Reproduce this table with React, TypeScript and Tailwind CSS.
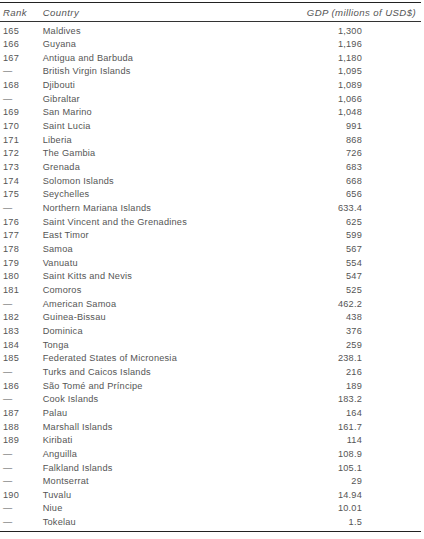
const rows: [string, string, string][] = [
  ["165", "Maldives", "1,300"],
  ["166", "Guyana", "1,196"],
  ["167", "Antigua and Barbuda", "1,180"],
  ["—", "British Virgin Islands", "1,095"],
  ["168", "Djibouti", "1,089"],
  ["—", "Gibraltar", "1,066"],
  ["169", "San Marino", "1,048"],
  ["170", "Saint Lucia", "991"],
  ["171", "Liberia", "868"],
  ["172", "The Gambia", "726"],
  ["173", "Grenada", "683"],
  ["174", "Solomon Islands", "668"],
  ["175", "Seychelles", "656"],
  ["—", "Northern Mariana Islands", "633.4"],
  ["176", "Saint Vincent and the Grenadines", "625"],
  ["177", "East Timor", "599"],
  ["178", "Samoa", "567"],
  ["179", "Vanuatu", "554"],
  ["180", "Saint Kitts and Nevis", "547"],
  ["181", "Comoros", "525"],
  ["—", "American Samoa", "462.2"],
  ["182", "Guinea-Bissau", "438"],
  ["183", "Dominica", "376"],
  ["184", "Tonga", "259"],
  ["185", "Federated States of Micronesia", "238.1"],
  ["—", "Turks and Caicos Islands", "216"],
  ["186", "São Tomé and Príncipe", "189"],
  ["—", "Cook Islands", "183.2"],
  ["187", "Palau", "164"],
  ["188", "Marshall Islands", "161.7"],
  ["189", "Kiribati", "114"],
  ["—", "Anguilla", "108.9"],
  ["—", "Falkland Islands", "105.1"],
  ["—", "Montserrat", "29"],
  ["190", "Tuvalu", "14.94"],
  ["—", "Niue", "10.01"],
  ["—", "Tokelau", "1.5"],
];

export default function App() {
  return (
    <div className="min-h-screen bg-white pt-[2px] font-['Liberation_Sans',Arial,sans-serif] text-[9.2px] tracking-[0.22px] text-[#555]">
      <div className="w-[421px] border-y-[1.5px] border-[#222]">
        {/* Header */}
        <div className="grid h-[18.5px] grid-cols-[42.7px_1fr_auto] items-center border-b border-[#333] pt-[3px] text-[9.6px] tracking-[0.4px] italic">
          <span className="pl-[3px]">Rank</span>
          <span>Country</span>
          <span className="pr-[5px]">GDP (millions of USD$)</span>
        </div>

        {/* Rows */}
        <div className="pt-[3px] pb-[1px]">
          {rows.map(([rank, country, gdp]) => (
            <div
              key={country}
              className="grid h-[13.66px] grid-cols-[42.7px_1fr_auto] items-center leading-[13.66px]"
            >
              <span className="pl-[3px]">{rank}</span>
              <span>{country}</span>
              <span className="pr-[59px] text-right">{gdp}</span>
            </div>
          ))}
        </div>
      </div>
    </div>
  );
}
